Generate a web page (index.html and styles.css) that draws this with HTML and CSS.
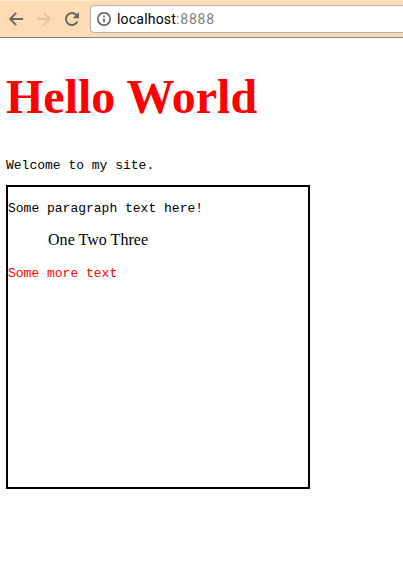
FILE: index.html
```
<!DOCTYPE html>
<html lang="en">
<head>
<meta charset="utf-8">
<title>localhost:8888</title>
<link rel="stylesheet" href="styles.css">
</head>
<body>
<header class="toolbar">
  <svg class="icon" viewBox="0 0 16 16"><path d="M15 8H2.4M8.2 1.9 2.1 8 8.2 14.1"/></svg>
  <svg class="icon icon-disabled" viewBox="0 0 16 16"><path d="M1 8h12.6M7.8 1.9 13.9 8 7.8 14.1"/></svg>
  <svg class="icon" viewBox="0 0 16 16"><path d="M13.4 10.5A6 6 0 1 1 12.4 4L13.3 5"/><path class="solid" d="M15 1v6.3H8.7z"/></svg>
  <div class="address">
    <svg class="info" viewBox="0 0 14 14"><circle cx="7" cy="7" r="6.2"/><path d="M7 6.2v4.3M7 3.4v1.5"/></svg>
    <span class="url">localhost<span class="port">:8888</span></span>
  </div>
</header>
<main class="page">
  <h1>Hello World</h1>
  <p>Welcome to my site.</p>
  <section class="box">
    <p>Some paragraph text here!</p>
    <div class="list">One Two Three</div>
    <p class="red">Some more text</p>
  </section>
</main>
</body>
</html>
```
FILE: styles.css
```
body {
  margin: 0;
  background: #fff;
  color: #000;
  font: 16px/18px "Liberation Serif", serif;
}
.toolbar {
  box-sizing: border-box;
  height: 38px;
  padding: 5px 0 4px 8px;
  display: flex;
  align-items: center;
  gap: 12px;
  background: linear-gradient(#fee8d0 0, #fee8d0 1px, #fddbb3 1px, #fddbb4 100%);
  border-bottom: 1px solid #85808f;
  overflow: hidden;
}
.icon {
  width: 16px;
  height: 16px;
  flex: none;
  fill: none;
  stroke: #6b6561;
  stroke-width: 1.9;
}
.icon .solid {
  fill: #6b6561;
  stroke: none;
}
.icon-disabled {
  stroke: #dfc5a5;
}
.address {
  box-sizing: border-box;
  width: 330px;
  height: 28px;
  margin-left: -2px;
  padding-left: 6px;
  flex: none;
  display: flex;
  align-items: center;
  gap: 6px;
  background: #fff;
  border: 1px solid #b3b2b8;
  border-radius: 4px;
}
.info {
  width: 14px;
  height: 14px;
  fill: none;
  stroke: #5a5a5a;
  stroke-width: 1.5;
}
.url {
  font: 14px/18px Roboto, sans-serif;
  letter-spacing: 0.2px;
}
.port {
  color: #808080;
  letter-spacing: 0.8px;
}
.page {
  padding: 31px 6px 0;
}
h1 {
  margin: 0 0 34px;
  color: #f00;
  font-size: 48px;
  line-height: 55px;
}
p {
  margin: 0;
  font: 13px/15px "Liberation Mono", monospace;
}
.box {
  box-sizing: border-box;
  width: 304px;
  height: 304px;
  margin-top: 12px;
  padding-top: 14px;
  border: 2px solid #000;
}
.list {
  margin: 15px 0 17px;
  padding-left: 40px;
  letter-spacing: 0.04px;
}
.red {
  color: #f00;
}
```
